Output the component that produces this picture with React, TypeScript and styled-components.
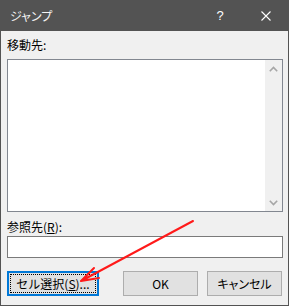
import React from 'react';
import styled, { createGlobalStyle } from 'styled-components';

const Global = createGlobalStyle`
  html, body { margin: 0; padding: 0; background: #f0f0f0; }
  body { font-family: "Noto Sans CJK JP", "Noto Sans", sans-serif; }
`;

const Window = styled.div`
  position: relative;
  width: 289px;
  height: 306px;
  box-sizing: border-box;
  background: #f0f0f0;
  display: flex;
  flex-direction: column;
  border: 1px solid #535353;
  border-top: none;
  font-family: "Noto Sans CJK JP", "Noto Sans", sans-serif;
  font-size: 12px;
  color: #000;
`;

const TitleBar = styled.div`
  height: 31px;
  margin: 0 -1px;
  background: #535353;
  display: flex;
  align-items: center;
  color: #fff;
`;

const TitleText = styled.div`
  flex: 1;
  padding-left: 10px;
  font-size: 12px;
  line-height: 16px;
  font-feature-settings: "palt";
  color: #f4f4f4;
`;

const TitleButton = styled.div`
  width: 46px;
  height: 31px;
  display: flex;
  align-items: center;
  justify-content: center;
  font-family: "Liberation Sans", sans-serif;
  font-size: 13px;
  color: #fff;
`;

const Content = styled.div`
  flex: 1;
  display: flex;
  flex-direction: column;
  padding: 6px 5px 0 6px;
`;

const Label = styled.div<{ $gap: number }>`
  margin-top: ${p => p.$gap}px;
  line-height: 16px;
  height: 16px;
  white-space: nowrap;
`;

const U = styled.span`
  text-decoration: underline;
  text-underline-offset: 1px;
`;

const ListBox = styled.div`
  margin-top: 6px;
  height: 153px;
  box-sizing: border-box;
  border: 1px solid #828790;
  background: #fff;
  display: flex;
`;

const ListArea = styled.div`
  flex: 1;
`;

const ScrollTrack = styled.div`
  width: 17px;
  background: #f0f0f0;
  display: flex;
  flex-direction: column;
  justify-content: space-between;
`;

const ScrollArrow = styled.div`
  width: 17px;
  height: 17px;
  display: flex;
  align-items: center;
  justify-content: center;
`;

const TextInput = styled.div`
  margin-top: 1px;
  height: 22px;
  box-sizing: border-box;
  border: 1px solid #7a7a7a;
  background: #fff;
`;

const ButtonRow = styled.div`
  margin-top: 13px;
  display: flex;
  align-items: flex-start;
`;

const Button = styled.div<{ $w: number; $ml: number; $focused?: boolean }>`
  position: relative;
  width: ${p => p.$w}px;
  margin-left: ${p => p.$ml}px;
  height: 25px;
  box-sizing: border-box;
  background: #e1e1e1;
  border: ${p => (p.$focused ? '2px solid #0078d7' : '1px solid #adadad')};
  display: flex;
  align-items: center;
  justify-content: center;
  line-height: 16px;
  white-space: nowrap;
`;

const FocusRing = styled.div`
  position: absolute;
  inset: 1px;
  border: 1px dotted #000;
  pointer-events: none;
`;

const Kana = styled.span`
  font-feature-settings: "palt";
`;

const Overlay = styled.svg`
  position: absolute;
  left: 0;
  top: 0;
  width: 289px;
  height: 306px;
  pointer-events: none;
`;

const Chevron = ({ up }: { up?: boolean }) => (
  <svg width="9" height="6" viewBox="0 0 9 6">
    <path
      d={up ? 'M0.8 5.2 L4.5 1.4 L8.2 5.2' : 'M0.8 0.8 L4.5 4.6 L8.2 0.8'}
      fill="none"
      stroke="#a6a6a6"
      strokeWidth="1.6"
    />
  </svg>
);

export default function App() {
  return (
    <>
      <Global />
      <Window>
        <TitleBar>
          <TitleText>ジャンプ</TitleText>
          <TitleButton>?</TitleButton>
          <TitleButton>
            <svg width="10" height="10" viewBox="0 0 10 10">
              <path d="M0.5 0.5 L9.5 9.5 M9.5 0.5 L0.5 9.5" stroke="#fff" strokeWidth="1.1" />
            </svg>
          </TitleButton>
        </TitleBar>
        <Content>
          <Label $gap={0}>移動先:</Label>
          <ListBox>
            <ListArea />
            <ScrollTrack>
              <ScrollArrow><Chevron up /></ScrollArrow>
              <ScrollArrow><Chevron /></ScrollArrow>
            </ScrollTrack>
          </ListBox>
          <Label $gap={7}>参照先(<U>R</U>):</Label>
          <TextInput />
          <ButtonRow>
            <Button $w={92} $ml={0} $focused>
              <FocusRing />
              セル選択(<U>S</U>)...
            </Button>
            <Button $w={75} $ml={24}>OK</Button>
            <Button $w={75} $ml={9}><Kana>キャンセル</Kana></Button>
          </ButtonRow>
        </Content>
        <Overlay viewBox="0 0 289 306">
          <path
            d="M192 221 L80 281 M80 281 L93 268 M80 281 L98 278"
            fill="none"
            stroke="#ff1a1a"
            strokeWidth="2"
            strokeLinecap="round"
          />
        </Overlay>
      </Window>
    </>
  );
}
